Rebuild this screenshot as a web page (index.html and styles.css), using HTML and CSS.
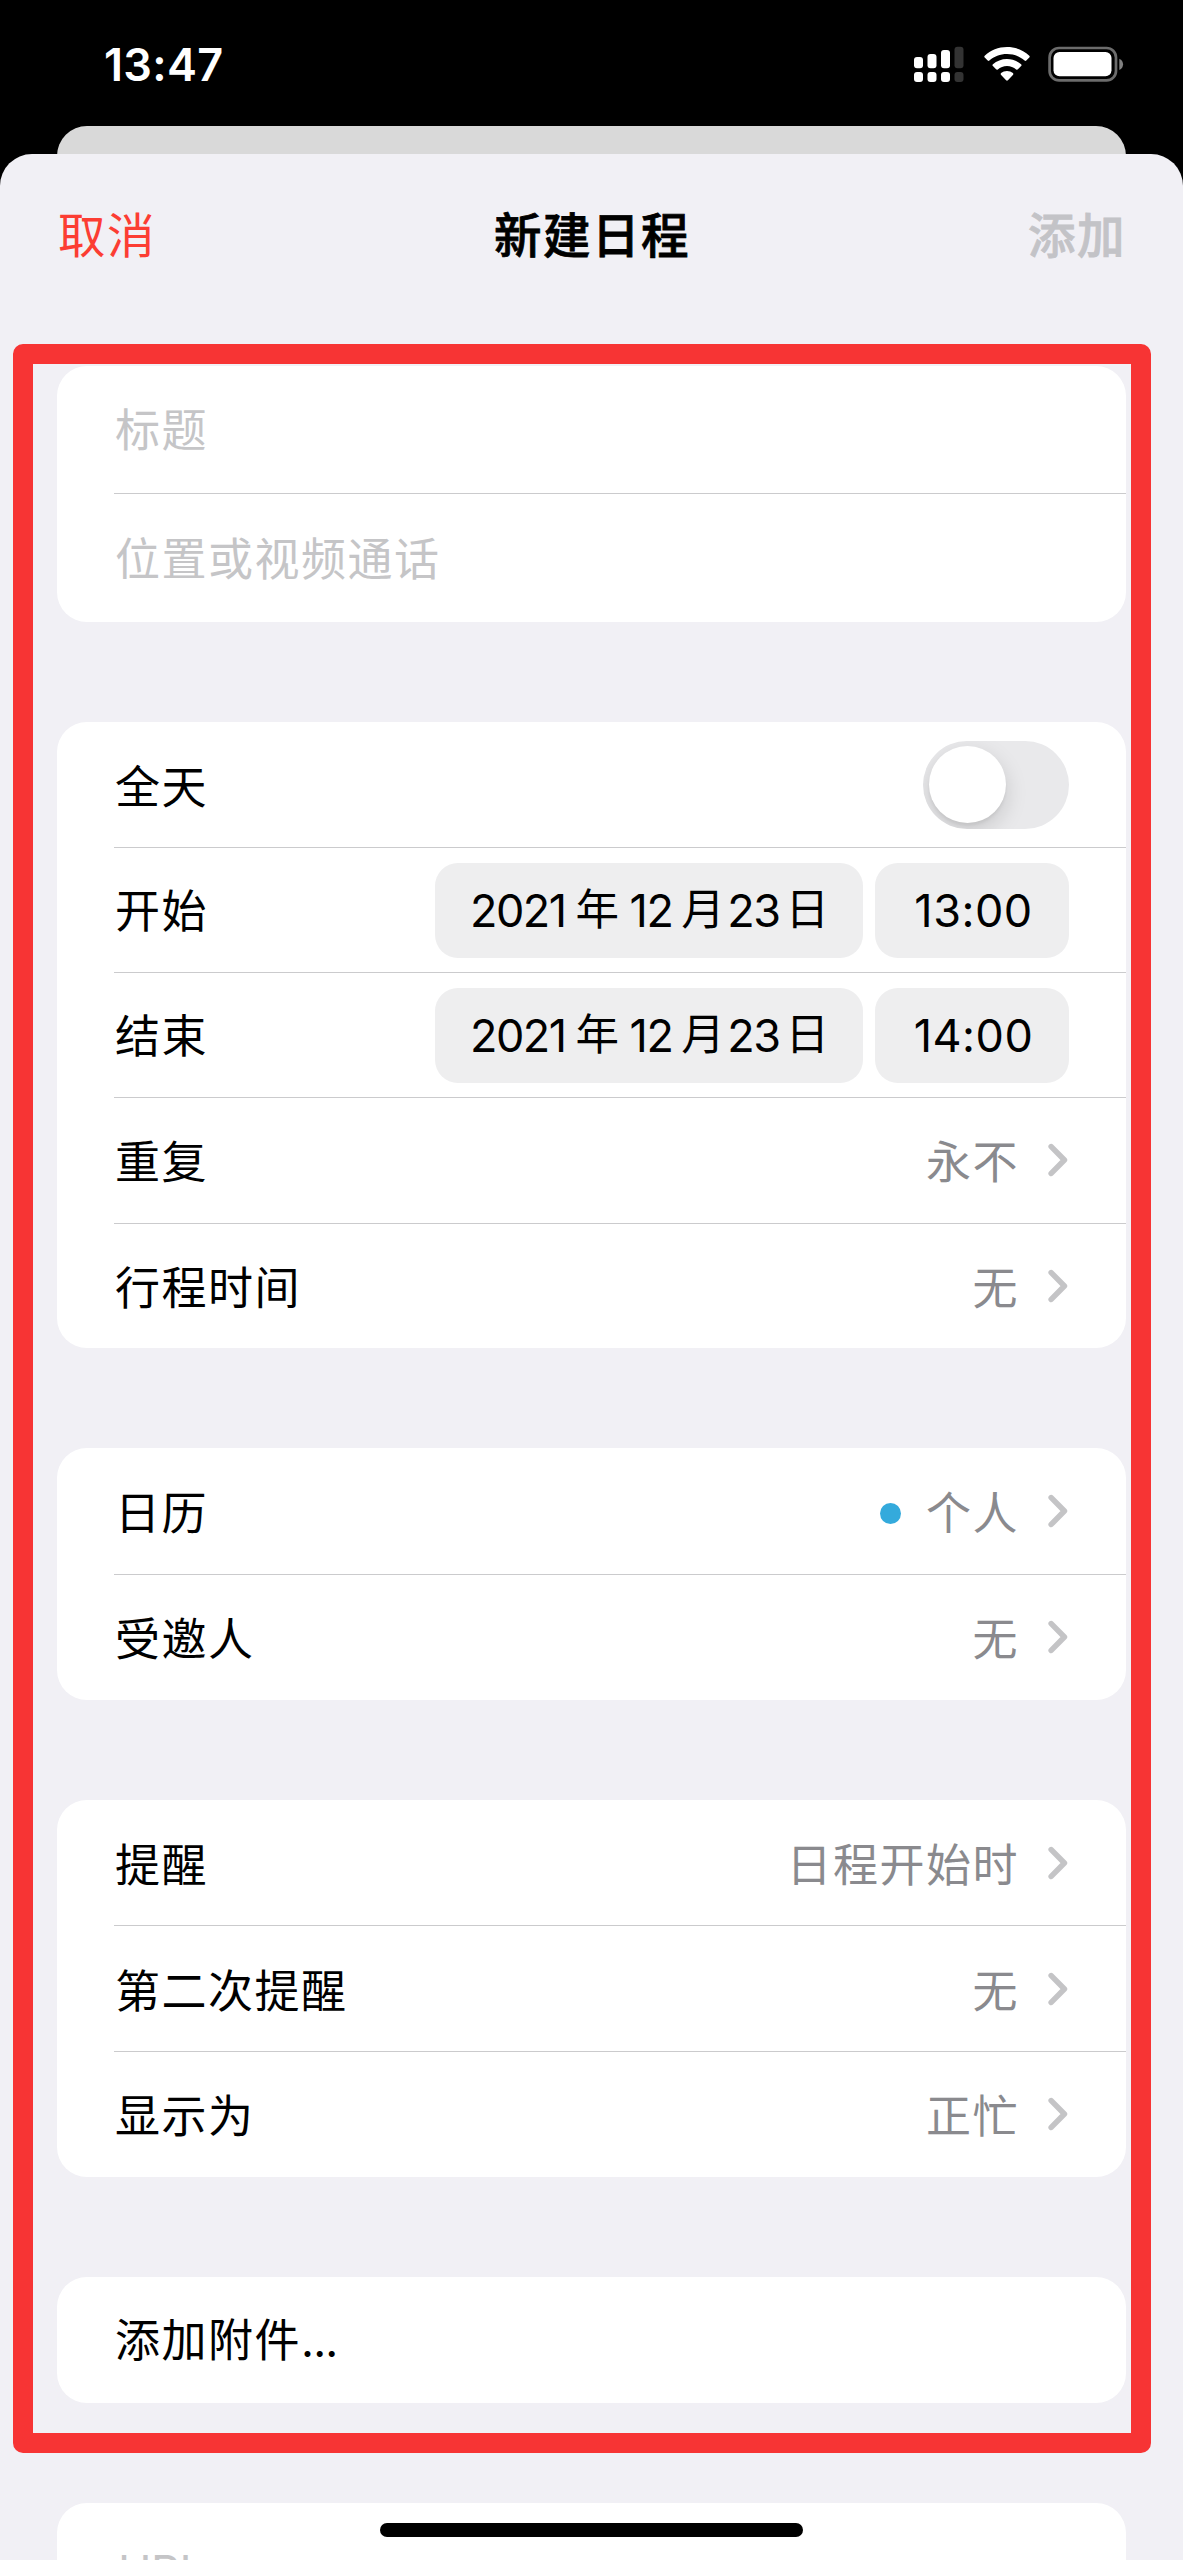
FILE: index.html
```html
<!DOCTYPE html>
<html lang="zh-CN">
<head>
<meta charset="utf-8">
<title>新建日程</title>
<link rel="stylesheet" href="styles.css">
</head>
<body>
<svg class="defs" width="0" height="0" aria-hidden="true">
  <symbol id="chevron" viewBox="0 0 20 34"><path d="M3.2 3.6 16.4 17 3.2 30.4" fill="none" stroke="#c4c4c6" stroke-width="5.6" stroke-linecap="round" stroke-linejoin="round"/></symbol>
</svg>
<div class="phone">
  <header class="status">
    <span class="clock">13:47</span>
    <div class="status-icons">
      <svg class="signal" width="50" height="36" viewBox="0 0 50 36">
        <g fill="#fff">
          <rect x="0" y="11" width="9" height="11.3" rx="3"/><rect x="13.5" y="8" width="9" height="14.3" rx="3"/><rect x="27" y="4" width="9" height="18.3" rx="3"/>
          <rect x="0" y="26" width="9" height="10" rx="3"/><rect x="13.5" y="26" width="9" height="10" rx="3"/><rect x="27" y="26" width="9" height="10" rx="3"/>
        </g>
        <g fill="#333"><rect x="40.5" y="0.7" width="9" height="21.6" rx="3"/><rect x="40.5" y="26" width="9" height="10" rx="3"/></g>
      </svg>
      <svg class="wifi" width="46" height="36" viewBox="0 0 46 36">
        <path fill="#fff" d="M23 1C14.400 1 6.600 4.200.7 9.700q-.9.900 0 1.800l3 3q.8.800 1.700 0C10 10.300 16.100 7.900 23 7.900s13 2.400 17.600 6.600q.9.800 1.700 0l3-3q.9-.9 0-1.800C39.400 4.200 31.600 1 23 1zM23 13c-5.400 0-10.300 2-14.100 5.300q-.9.900 0 1.800l3.200 3.200q.8.800 1.700.1c2.500-2.200 5.700-3.500 9.200-3.500s6.700 1.300 9.200 3.500q.9.700 1.700-.1l3.200-3.200q.9-.9 0-1.800C33.300 15 28.400 13 23 13zM23 25c-2.200 0-4.300.8-5.900 2.100q-.9.900 0 1.800l5 5.400q.9.900 1.800 0l5-5.400q.9-.9 0-1.800C27.300 25.800 25.200 25 23 25z"/>
      </svg>
      <svg class="battery" width="76" height="36" viewBox="0 0 76 36">
        <rect x="1.600" y="2" width="66.400" height="32.400" rx="9.500" fill="none" stroke="#6c6c6c" stroke-width="2.700"/>
        <rect x="5.500" y="6" width="58" height="24.300" rx="6" fill="#fff"/>
        <path d="M71.300 12.700c5 1.800 5 9.500 0 11.300z" fill="#808080"/>
      </svg>
    </div>
  </header>
  <div class="sheet-behind"></div>
  <main class="sheet">
    <nav class="bar">
      <span class="cancel">取消</span>
      <h1 class="title">新建日程</h1>
      <span class="add">添加</span>
    </nav>

    <section class="card fields">
      <div class="row placeholder">标题</div>
      <div class="row placeholder">位置或视频通话</div>
    </section>

    <section class="card times">
      <div class="row"><span class="all-day">全天</span><span class="toggle"><i class="knob"></i></span></div>
      <div class="row"><span>开始</span>
        <span class="pills"><span class="pill date"><b>2021</b><em class="year">年</em><b>12</b><em class="month">月</em><b>23</b><em class="day">日</em></span><span class="pill time">13:00</span></span></div>
      <div class="row"><span>结束</span>
        <span class="pills"><span class="pill date"><b>2021</b><em class="year">年</em><b>12</b><em class="month">月</em><b>23</b><em class="day">日</em></span><span class="pill time">14:00</span></span></div>
      <div class="row link"><span>重复</span><span class="value">永不</span><svg class="chev"><use href="#chevron"/></svg></div>
      <div class="row link"><span>行程时间</span><span class="value">无</span><svg class="chev"><use href="#chevron"/></svg></div>
    </section>

    <section class="card">
      <div class="row link"><span>日历</span><span class="value"><i class="dot"></i>个人</span><svg class="chev"><use href="#chevron"/></svg></div>
      <div class="row link"><span>受邀人</span><span class="value">无</span><svg class="chev"><use href="#chevron"/></svg></div>
    </section>

    <section class="card">
      <div class="row link"><span>提醒</span><span class="value">日程开始时</span><svg class="chev"><use href="#chevron"/></svg></div>
      <div class="row link"><span>第二次提醒</span><span class="value">无</span><svg class="chev"><use href="#chevron"/></svg></div>
      <div class="row link"><span>显示为</span><span class="value">正忙</span><svg class="chev"><use href="#chevron"/></svg></div>
    </section>

    <section class="card">
      <div class="row link attach"><span>添加附件<span class="dots">...</span></span></div>
    </section>

    <section class="card">
      <div class="row placeholder url">URL</div>
    </section>
  </main>
  <div class="highlight"></div>
  <div class="home-indicator"></div>
</div>
</body>
</html>
```
FILE: styles.css
```css
* { box-sizing: border-box; }

body {
  margin: 0;
  background: #000;
  font-family: Inter, "Noto Sans CJK SC", sans-serif;
  font-size: 45px;
  letter-spacing: 1.500px;
  line-height: 1;
  color: #000;
}

.defs { position: absolute; }

.phone {
  position: relative;
  width: 1183px;
  height: 2560px;
  overflow: hidden;
  display: flex;
  flex-direction: column;
  background: #000;
}

/* status bar */
.status {
  height: 126px;
  flex: none;
  display: flex;
  justify-content: space-between;
  padding: 46px 59px 0 104px;
}
.clock {
  color: #fff;
  font-size: 45px;
  font-weight: 600;
  line-height: 38px;
  letter-spacing: 0.3px;
}
.status-icons { display: flex; align-items: flex-start; }
.wifi { margin-left: 20.500px; }
.battery { margin-left: 18px; }

/* sheets */
.sheet-behind {
  flex: none;
  height: 60px;
  margin: 0 57px -32px;
  border-radius: 30px 30px 0 0;
  background: #d9d9d9;
}
.sheet {
  position: relative;
  flex: 1;
  min-height: 0;
  overflow: hidden;
  padding: 0 57px;
  border-radius: 32px 32px 0 0;
  background: #f1f0f5;
}

.bar {
  display: grid;
  grid-template-columns: 1fr auto 1fr;
  align-items: center;
  height: 163px;
  margin-bottom: 49px;
  padding-left: 1px;
  font-size: 47.500px;
}
.cancel { color: #fc3d33; }
.title { margin: 0; font-size: 47.500px; font-weight: 500; -webkit-text-stroke: 0.800px #000; }
.add { justify-self: end; color: #c3c3c7; font-weight: 500; -webkit-text-stroke: 0.800px #c3c3c7; }

/* grouped cards */
.card {
  margin-bottom: 100px;
  padding-left: 58px;
  border-radius: 30px;
  background: #fff;
}
.row {
  height: 125px;
  display: flex;
  align-items: center;
  justify-content: space-between;
  padding-top: 2px;
  padding-right: 57px;
}
.row + .row { border-top: 1px solid #cbcbcd; margin-left: -1px; padding-left: 1px; }
.row.link { height: 125.700px; padding-top: 5px; }
.row.placeholder { height: 129px; padding-top: 2px; color: #c5c5c7; }
.fields .row:first-child { height: 127px; }
.row.url { height: 136px; padding-left: 3px; letter-spacing: -0.500px; }
.row.attach { padding-top: 2px; }

.value {
  display: flex;
  align-items: center;
  margin-left: auto;
  color: #8a8a8e;
}
.chev { width: 20px; height: 34px; margin: -5px 1px 0 29px; }
.dot {
  width: 21px;
  height: 21px;
  margin-right: 25px;
  border-radius: 50%;
  background: #34aadc;
}
.dots { letter-spacing: -0.800px; }
.all-day { padding-top: 4px; }

.toggle {
  width: 146px;
  height: 88px;
  margin-top: -2px;
  padding: 5.500px;
  border-radius: 44px;
  overflow: hidden;
  background: #e9e9eb;
}
.knob {
  display: block;
  width: 77px;
  height: 77px;
  border-radius: 50%;
  background: #fff;
  box-shadow: 0 8px 22px rgba(0, 0, 0, .15), 0 3px 3px rgba(0, 0, 0, .05);
}

.pills { display: flex; gap: 12px; margin-top: -2px; }
.pill {
  height: 95px;
  display: flex;
  align-items: center;
  justify-content: center;
  border-radius: 23px;
  background: #eeeeef;
}
.date {
  width: 428px;
  justify-content: flex-start;
  padding-left: 35px;
  letter-spacing: 0;
}
.time { width: 194px; padding-left: 3px; letter-spacing: 0.500px; }
.date b { font-weight: 400; letter-spacing: -1.500px; }
.date em { font-style: normal; font-size: 43.500px; }
.year { margin: 0 10.500px 0 10px; }
.month { margin: 0 2.500px 0 9px; }
.day { margin-left: 6px; }

/* annotation frame drawn over the form */
.highlight {
  position: absolute;
  left: 13px;
  top: 344px;
  width: 1138px;
  height: 2109px;
  border: 20px solid #f73434;
  border-radius: 10px;
}
.home-indicator {
  position: absolute;
  left: 380px;
  top: 2523px;
  width: 423px;
  height: 14px;
  border-radius: 7px;
  background: #000;
}
```
